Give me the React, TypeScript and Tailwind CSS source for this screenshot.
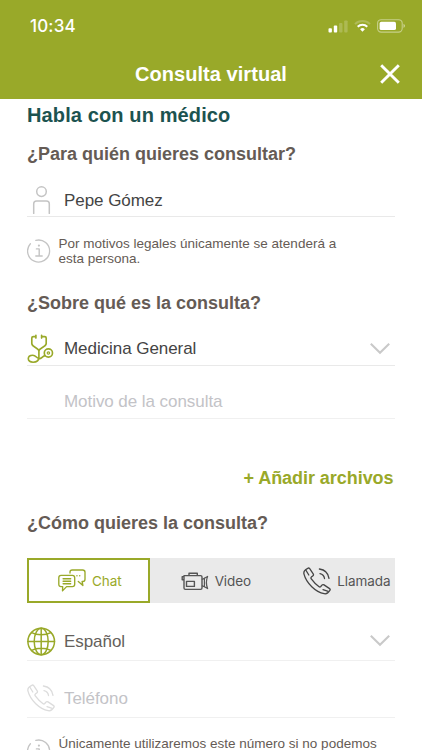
import React from "react";

type IconProps = { className?: string };

const stroke = {
  fill: "none",
  stroke: "currentColor",
  strokeLinecap: "round" as const,
  strokeLinejoin: "round" as const,
};

function Signal() {
  return (
    <svg width="20" height="13" viewBox="0 0 20 13" fill="#fff">
      <rect x="0.5" y="8.2" width="3.4" height="4.3" rx="0.9" />
      <rect x="5.8" y="5.6" width="3.4" height="6.9" rx="0.9" />
      <rect x="11.1" y="3" width="3.4" height="9.5" rx="0.9" opacity="0.2" />
      <rect x="16.2" y="0.4" width="3.4" height="12.1" rx="0.9" opacity="0.2" />
    </svg>
  );
}

function Wifi() {
  return (
    <svg width="17" height="12" viewBox="0 0 17 12" fill="none" stroke="#fff" strokeWidth="2">
      <path d="M1 4.1a10.8 10.8 0 0 1 15 0" opacity="0.22" />
      <path d="M3.7 6.7a7 7 0 0 1 9.6 0" />
      <path d="M8.5 11.7 6.1 9.2a3.5 3.5 0 0 1 4.8 0z" fill="#fff" stroke="none" />
    </svg>
  );
}

function Battery() {
  return (
    <svg width="29" height="14" viewBox="0 0 29 14">
      <rect x="0.6" y="0.7" width="24.6" height="12.4" rx="3.6" fill="none" stroke="#fff" strokeOpacity="0.45" strokeWidth="1.1" />
      <rect x="2.6" y="2.7" width="16.4" height="8.4" rx="1.7" fill="#fff" />
      <path d="M26.5 4.8c2 .8 2 3.4 0 4.2z" fill="#fff" opacity="0.5" />
    </svg>
  );
}

function Close() {
  return (
    <svg width="20" height="20" viewBox="0 0 20 20" stroke="#fff" strokeWidth="2.9">
      <path d="M1.2 1.2 18.8 18.8M18.8 1.2 1.2 18.8" />
    </svg>
  );
}

function Person({ className }: IconProps) {
  return (
    <svg className={className} width="28" height="28" viewBox="0 0 28 28" {...stroke} strokeWidth="1.5">
      <circle cx="14.5" cy="5.6" r="4.8" />
      <path d="M6.7 27.4v-9.6c0-1.9 1-2.9 2.9-2.9h9.8c1.9 0 2.9 1 2.9 2.9v9.6" />
    </svg>
  );
}

function Info({ className }: IconProps) {
  return (
    <svg className={className} width="24" height="24" viewBox="0 0 24 24" {...stroke} strokeWidth="1.3">
      <path d="M8.8 1.4A11 11 0 1 1 3.4 4.7" />
      <path d="M9.4 9.9h2.8v6.9M8.8 17h6.4" strokeWidth="1.4" />
      <circle cx="11.9" cy="6.6" r="1.1" fill="currentColor" stroke="none" />
    </svg>
  );
}

function Stethoscope({ className }: IconProps) {
  return (
    <svg className={className} width="28" height="30" viewBox="0 0 28 30" {...stroke} strokeWidth="1.65">
      <path d="M8.9 1.3v2.8M8.9 2.6H6.3Q4.8 2.6 4.8 4.1v5.3c0 3.4 5.6 4.2 7 7M14.6 1.3v2.8M14.6 2.6h3.1q1.5 0 1.5 1.5v5.3c0 3.4-5.9 4.2-7.3 7" />
      <path d="M11.9 16.4v6.6c0 3.2-2.4 5.2-5.8 5.2-2.9 0-4.8-1.4-4.8-3.5s1.8-3.5 4.5-3.5c3.4 0 3.7 3.4 6.5 3.4 2.4 0 2.8-2.2 5.6-3" />
      <circle cx="21.4" cy="19" r="4.1" />
      <circle cx="21.4" cy="19" r="1.2" strokeWidth="1.2" />
    </svg>
  );
}

function Chevron() {
  return (
    <svg width="22" height="13" viewBox="0 0 22 13" fill="none" stroke="#c9c9c9" strokeWidth="2.1">
      <path d="M1.8 1.8 11 10.8l9.2-9" />
    </svg>
  );
}

function Chat() {
  return (
    <svg width="28" height="24" viewBox="0 0 28 24" {...stroke} strokeWidth="1.35">
      <path d="M3 6.4h11.4q2.3 0 2.3 2.3v6.6q0 2.3-2.3 2.3H8.6l-4.1 4.3.2-4.3H3Q.8 17.6.8 15.3V8.7Q.8 6.4 3 6.4z" />
      <path d="M5.1 9.7h7.6M5.1 12.2h7.6M5.1 14.7h7.6" />
      <path d="M12 4V3q0-2 2.2-2h10.4Q27 1 27 3.2v7.1q0 2.2-2.2 2.2h-.7l.8 4-4.6-4" />
      <path d="M18.9 6.7h.1M21.7 6.7h.1" />
    </svg>
  );
}

function VideoCamera() {
  return (
    <svg width="28" height="20" viewBox="0 0 28 20" {...stroke} strokeWidth="1.4">
      <path d="M3 4.6h16.6q1.4 0 1.4 1.4v11q0 1.4-1.4 1.4H4.4Q3 18.4 3 17zM3 5.6H1.2v3.2H3M8 4.6V2.2h8.3v2.4" />
      <rect x="5.5" y="10.4" width="7.9" height="5" />
      <path d="M21.3 8.2 23.4 7.2l3.2-1.8c-1.6 4-1.6 8.2 0 12.2l-3.2-1.8-2.1-.9M23.4 7.2v8.6" strokeWidth="1.2" />
    </svg>
  );
}

function Phone({ className }: IconProps) {
  return (
    <svg className={className} width="28" height="28" viewBox="0 0 28 28" {...stroke} strokeWidth="1.3">
      <path d="M5.2 1.1Q6 .8 6.7 1.6l3.5 5.2q.8 1.2-.5 2.2L8.3 10.1q-.7.8 0 1.8 3.2 4.5 7.8 7.8.9.6 1.7-.2l1.1-1.3q.9-1.1 2.1-.3l5.6 3.7q1 .7.2 1.9c-1.4 2.4-3.4 3.7-5.6 3.2C12.6 25.2 3.4 16.2 1 7.1.3 4.5 1.6 2.7 5.2 1.1z" />
      <path d="m2.8 3 3 5M20 22.6l5.2 1.7M17 6.7c2.6.5 4.1 2.2 4.5 4.8M16.4 2c5.2.7 8.8 4.2 9.6 9.4" />
    </svg>
  );
}

function Globe({ className }: IconProps) {
  return (
    <svg className={className} width="29" height="29" viewBox="0 0 29 29" {...stroke} strokeWidth="1.5">
      <circle cx="14.2" cy="14.5" r="13.3" />
      <ellipse cx="14.2" cy="14.5" rx="7" ry="13.3" />
      <path d="M14.2 1.2v26.6M.9 14.5h26.6M4.6 5.6c5.1 2.8 14.1 2.8 19.2 0M4.6 23.4c5.1-2.8 14.1-2.8 19.2 0" />
    </svg>
  );
}

function Question({ children }: { children: React.ReactNode }) {
  return <h2 className="h-[46px] text-[18px] leading-[46px] font-bold whitespace-nowrap text-[#655b55]">{children}</h2>;
}

function Note({ children, className }: { children: React.ReactNode; className: string }) {
  return (
    <div className={`flex shrink-0 ${className}`}>
      <Info className="mt-[3px] mr-[7.5px] shrink-0 text-[#c4c4c4]" />
      <p className="text-[13.5px] leading-[15px] whitespace-nowrap text-[#655b55]">{children}</p>
    </div>
  );
}

export default function App() {
  return (
    <div className="flex h-[750px] w-[422px] flex-col overflow-hidden bg-white font-['Liberation_Sans',Arial,sans-serif]">
      <header className="h-[99px] shrink-0 bg-[#99a929] text-white">
        <div className="flex h-[52px] items-center pr-[16px] pl-[30px]">
          <span className="flex-1 font-['Inter',sans-serif] text-[17px] leading-[52px] font-medium tracking-[0.15px]">10:34</span>
          <div className="flex items-center gap-[6px]">
            <Signal />
            <Wifi />
            <Battery />
          </div>
        </div>
        <div className="grid h-[44px] grid-cols-[1fr_auto_1fr] items-center">
          <span />
          <h1 className="text-[20px] leading-[44px] font-bold tracking-[0.05px]">Consulta virtual</h1>
          <button className="mr-[22px] justify-self-end" aria-label="Cerrar">
            <Close />
          </button>
        </div>
      </header>

      <main className="flex min-h-0 flex-1 flex-col overflow-hidden pr-[27px] pl-[27px]">
        <h2 className="h-8 shrink-0 text-[20px] leading-8 font-bold tracking-[0.12px] text-[#1c5350]">Habla con un médico</h2>
        <Question>¿Para quién quieres consultar?</Question>
        <div className="mt-[6px] flex h-[34px] shrink-0 items-center border-b border-[#e9e9e9]">
          <Person className="mr-[9px] text-[#c4c4c4]" />
          <span className="pt-0.5 text-[17px] tracking-[-0.06px] text-[#444]">Pepe Gómez</span>
        </div>
        <Note className="h-[63px] pt-[19px]">
          Por motivos legales únicamente se atenderá a<br />
          esta persona.
        </Note>

        <Question>¿Sobre qué es la consulta?</Question>
        <div className="mt-[6px] flex h-[34px] shrink-0 items-center border-b border-[#e9e9e9]">
          <Stethoscope className="mr-[9px] text-[#99a929]" />
          <span className="flex-1 text-[17px] tracking-[-0.06px] text-[#444]">Medicina General</span>
          <span className="mr-1">
            <Chevron />
          </span>
        </div>
        <div className="mt-[18px] flex h-[35px] shrink-0 items-center border-b border-[#f0f0f0] pt-0.5 pl-[37px] text-[17px] tracking-[-0.06px] text-[#c3c3c7]">
          Motivo de la consulta
        </div>
        <button className="mt-[41px] mr-[1.5px] h-9 shrink-0 text-right text-[18px] leading-9 font-bold tracking-[-0.05px] text-[#99a929]">
          + Añadir archivos
        </button>

        <div className="mt-1 shrink-0">
          <Question>¿Cómo quieres la consulta?</Question>
        </div>
        <div className="mt-3 grid h-[45px] shrink-0 grid-cols-3 bg-[#eaeaea] font-['Inter',sans-serif] text-[13.5px] text-[#555]">
          <button className="flex items-center border-2 border-[#99a929] bg-white pl-[29px] text-[#99a929]">
            <Chat />
            <span className="ml-[6px] pt-px tracking-[-0.05px]">Chat</span>
          </button>
          <button className="flex items-center pl-[31px]">
            <VideoCamera />
            <span className="ml-[6px] pt-px tracking-[-0.1px]">Video</span>
          </button>
          <button className="flex items-center pl-[31px]">
            <Phone className="shrink-0 text-[#444]" />
            <span className="ml-[6px] pt-px tracking-[-0.1px]">Llamada</span>
          </button>
        </div>

        <div className="mt-[18px] flex h-10 shrink-0 items-center border-b border-[#f0f0f0]">
          <Globe className="mt-px mr-2 text-[#99a929]" />
          <span className="flex-1 pt-0.5 text-[17px] tracking-[-0.06px] text-[#655f5b]">Español</span>
          <span className="mr-1">
            <Chevron />
          </span>
        </div>
        <div className="mt-[18px] flex h-[39px] shrink-0 items-center border-b border-[#f0f0f0]">
          <Phone className="mr-[9px] text-[#dcdcdc]" />
          <span className="pt-0.5 text-[17px] tracking-[-0.06px] text-[#c3c3c7]">Teléfono</span>
        </div>
        <Note className="h-[63px] pt-[18px]">Únicamente utilizaremos este número si no podemos</Note>
      </main>
    </div>
  );
}
